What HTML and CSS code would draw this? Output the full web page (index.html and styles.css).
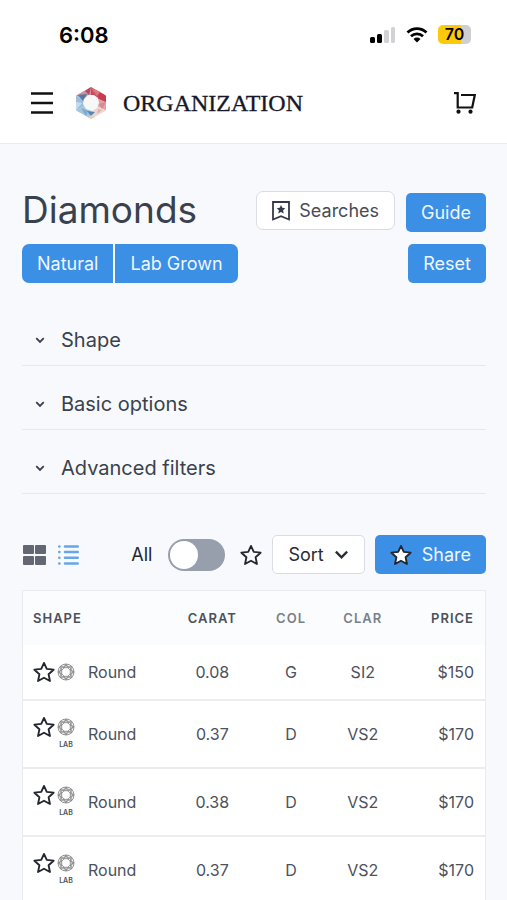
FILE: index.html
```html
<!DOCTYPE html>
<html lang="en">
<head>
<meta charset="utf-8">
<meta name="viewport" content="width=device-width, initial-scale=1">
<title>Diamonds</title>
<link rel="stylesheet" href="styles.css">
</head>
<body>
<svg class="defs" aria-hidden="true">
  <symbol id="star" viewBox="0 0 24 24"><path d="M12 2l3 6.600 7.500.9-5.500 5 1.500 7.300L12 18.200l-6.500 3.600L7 14.500l-5.500-5L9 8.600z"/></symbol>
  <symbol id="gem" viewBox="0 0 18 18">
    <circle cx="9" cy="9" r="8"/><circle cx="9" cy="9" r="6.200"/>
    <path d="M7.200 4.700h3.600l2.500 2.500v3.600l-2.500 2.500H7.200l-2.500-2.500V7.200z"/>
    <path d="M9 1l1.800 3.700 3.900-1.400-1.400 3.900L17 9l-3.700 1.800 1.400 3.900-3.900-1.400L9 17l-1.800-3.700-3.900 1.400 1.400-3.900L1 9l3.700-1.800-1.400-3.900 3.900 1.400z"/>
  </symbol>
  <symbol id="chevron" viewBox="0 0 16 16"><path d="M2 5l6 6 6-6"/></symbol>
</svg>

<header class="top">
  <div class="status">
    <span class="time">6:08</span>
    <div class="indicators">
      <svg width="26" height="17" viewBox="0 0 26 17" aria-hidden="true">
        <rect x="0" y="11" width="5" height="6" rx="1.500"/><rect x="7" y="8" width="5" height="9" rx="1.500"/>
        <rect x="14" y="4" width="5" height="13" rx="1.500" fill="#d2d2d4"/><rect x="21" y="1" width="4" height="16" rx="1.500" fill="#d2d2d4"/>
      </svg>
      <svg width="22" height="16" viewBox="0 0 22 16" aria-hidden="true">
        <path d="M1.500 5.500a13.500 13.500 0 0 1 19 0M5 9.300a8.600 8.600 0 0 1 12 0" fill="none" stroke="#000" stroke-width="2.800"/>
        <path d="M7.500 12a5 5 0 0 1 7 0L11 15.600z"/>
      </svg>
      <span class="battery"><span class="level">70</span></span>
    </div>
  </div>
  <div class="bar">
    <button class="icon-btn" aria-label="Menu">
      <svg width="22" height="22" viewBox="0 0 22 22" aria-hidden="true"><path d="M0 1.500h22M0 11h22M0 20.500h22" stroke="#111" stroke-width="2.400"/></svg>
    </button>
    <a class="brand" href="#">
      <svg width="32" height="34" viewBox="0 0 32 34" aria-hidden="true">
        <path d="M16 1L1 9.500 16 17z" fill="#c8929f"/><path d="M16 1l15 8.500L16 17z" fill="#cf4a59"/>
        <path d="M31 9.500v15L16 17z" fill="#e0a3a6"/><path d="M31 24.500L16 33V17z" fill="#eed6d0"/>
        <path d="M16 33L1 24.500 16 17z" fill="#a5c5df"/><path d="M1 24.500v-15L16 17z" fill="#9dbfdd"/>
        <path d="M16 1l-6 4 4 4z" fill="#b9485d"/><path d="M3 9l9-1-4 7z" fill="#5479af"/>
        <path d="M23 5l8 5v6l-7-3z" fill="#c83c50"/><path d="M16 2l6 8 3-4z" fill="#dc7980"/>
        <path d="M31 16l-7 2 3 5z" fill="#d98990"/><path d="M1 16l6 1-6 7z" fill="#c6dbea"/>
        <path d="M6 22l7 3-2 5z" fill="#7fa9d0"/><path d="M12 25l8 1-4 4z" fill="#5486b5"/>
        <path d="M13 31l4-2 3 2-4 2z" fill="#e8cfae"/><path d="M23 23l4 1-5 4z" fill="#e4b1ac"/>
        <path d="M13 9h6l4 3 1 5-2 5-5 3-6-2-3-5 1-5z" fill="#f6f7f7"/>
      </svg>
      <span>ORGANIZATION</span>
    </a>
    <button class="icon-btn cart" aria-label="Cart">
      <svg width="22" height="22" viewBox="0 0 22 22" aria-hidden="true">
        <path d="M0 1.200h3.700v14.300h14.500L20.800 3H7" fill="none" stroke="#111" stroke-width="2.200"/>
        <circle cx="4.500" cy="19.700" r="2.100" fill="#111"/><circle cx="16.500" cy="19.700" r="2.100" fill="#111"/>
      </svg>
    </button>
  </div>
</header>

<main class="page">
  <div class="heading">
    <h1>Diamonds</h1>
    <div class="heading-actions">
      <button class="btn btn-light searches">
        <svg width="18" height="20" viewBox="0 0 18 20" aria-hidden="true"><path d="M1 1h16v17.500l-8-3.300-8 3.300z" fill="none" stroke="#343b47" stroke-width="1.800"/><path d="M9 4l1.300 2.800 3 .4-2.200 2.100.6 3.100L9 10.900l-2.700 1.500.6-3.100-2.200-2.100 3-.4z" fill="#343b47"/></svg>
        Searches
      </button>
      <button class="btn guide">Guide</button>
    </div>
  </div>
  <div class="origin">
    <div class="segmented"><button class="btn">Natural</button><button class="btn">Lab Grown</button></div>
    <button class="btn">Reset</button>
  </div>

  <div class="filters">
    <button class="filter" aria-expanded="false"><svg class="chev" aria-hidden="true"><use href="#chevron"/></svg>Shape</button>
    <button class="filter" aria-expanded="false"><svg class="chev" aria-hidden="true"><use href="#chevron"/></svg>Basic options</button>
    <button class="filter" aria-expanded="false"><svg class="chev" aria-hidden="true"><use href="#chevron"/></svg>Advanced filters</button>
  </div>

  <div class="tools">
    <div class="views">
      <button class="icon-btn" aria-label="Grid view"><svg width="23" height="20" viewBox="0 0 23 20" fill="#646773" aria-hidden="true"><rect width="11" height="9" rx="1"/><rect x="12" width="11" height="9" rx="1"/><rect y="11" width="11" height="9" rx="1"/><rect x="12" y="11" width="11" height="9" rx="1"/></svg></button>
      <button class="icon-btn" aria-label="List view"><svg width="21" height="20" viewBox="0 0 21 20" stroke="#66a6e6" stroke-width="2.600" stroke-linecap="round" aria-hidden="true"><path d="M1.300 1.500h.1M1.300 7h.1M1.300 12.700h.1M1.300 18.500h.1M7 1.500h12.700M7 7h12.700M7 12.700h12.700M7 18.500h12.700"/></svg></button>
    </div>
    <label class="toggle">All<input type="checkbox" role="switch"></label>
    <button class="icon-btn" aria-label="Favourites only"><svg class="star" aria-hidden="true"><use href="#star"/></svg></button>
    <button class="btn btn-light sort">Sort<svg class="sort-chev" aria-hidden="true"><use href="#chevron"/></svg></button>
    <button class="btn share"><svg class="star star-filled" aria-hidden="true"><use href="#star"/></svg>Share</button>
  </div>

  <table class="results">
    <thead>
      <tr><th class="c-shape">Shape</th><th class="c-carat">Carat</th><th class="c-col soft">Col</th><th class="c-clar soft">Clar</th><th class="c-price">Price</th></tr>
    </thead>
    <tbody>
      <tr>
        <td><div class="shape"><button class="icon-btn" aria-label="Save"><svg class="star" aria-hidden="true"><use href="#star"/></svg></button><span class="gem"><svg aria-hidden="true"><use href="#gem"/></svg></span><span class="name">Round</span></div></td>
        <td>0.08</td><td>G</td><td>SI2</td><td>$150</td>
      </tr>
      <tr>
        <td><div class="shape lab"><button class="icon-btn" aria-label="Save"><svg class="star" aria-hidden="true"><use href="#star"/></svg></button><span class="gem"><svg aria-hidden="true"><use href="#gem"/></svg><small>LAB</small></span><span class="name">Round</span></div></td>
        <td>0.37</td><td>D</td><td>VS2</td><td>$170</td>
      </tr>
      <tr>
        <td><div class="shape lab"><button class="icon-btn" aria-label="Save"><svg class="star" aria-hidden="true"><use href="#star"/></svg></button><span class="gem"><svg aria-hidden="true"><use href="#gem"/></svg><small>LAB</small></span><span class="name">Round</span></div></td>
        <td>0.38</td><td>D</td><td>VS2</td><td>$170</td>
      </tr>
      <tr>
        <td><div class="shape lab"><button class="icon-btn" aria-label="Save"><svg class="star" aria-hidden="true"><use href="#star"/></svg></button><span class="gem"><svg aria-hidden="true"><use href="#gem"/></svg><small>LAB</small></span><span class="name">Round</span></div></td>
        <td>0.37</td><td>D</td><td>VS2</td><td>$170</td>
      </tr>
    </tbody>
  </table>
</main>
</body>
</html>
```
FILE: styles.css
```css
* { box-sizing: border-box; }

body {
  margin: 0;
  background: #f7f9fd;
  color: #3a414e;
  font-family: Inter, "Liberation Sans", sans-serif;
  font-size: 18px;
}

button {
  margin: 0;
  padding: 0;
  border: 0;
  background: none;
  color: inherit;
  font: inherit;
}

svg { display: block; flex: none; }
.defs { position: absolute; width: 0; height: 0; }
.icon-btn { display: flex; }

/* Header */
.top { background: #fff; border-bottom: 1px solid #e6e9ee; }

.status {
  display: flex;
  justify-content: space-between;
  align-items: center;
  height: 69px;
  padding: 0 36px 0 59px;
  color: #000;
}
.time { font-size: 22px; font-weight: 600; }
.indicators { display: flex; align-items: center; gap: 10px; }
.battery {
  display: flex;
  align-items: center;
  width: 33px;
  height: 19px;
  border-radius: 5px;
  background: linear-gradient(90deg, #fdc90b 70%, #cfcfd1 70%);
}
.level { width: 100%; text-align: center; font-size: 16px; font-weight: 600; line-height: 19px; }

.bar {
  display: flex;
  align-items: center;
  height: 74px;
  padding: 0 31px 6px;
}
.brand {
  display: flex;
  align-items: center;
  gap: 16px;
  margin-left: 22px;
  color: #15182a;
  font-family: "Liberation Serif", serif;
  font-size: 24px;
  text-decoration: none;
  -webkit-text-stroke: 0.3px #15182a;
}
.cart { margin-left: auto; }

/* Page */
.page { padding: 47px 21px 0 22px; }

.btn {
  display: flex;
  align-items: center;
  justify-content: center;
  height: 39px;
  padding: 0 15px;
  border-radius: 5px;
  background: #3b8fe5;
  color: #eef6ff;
}
.btn-light {
  border: 1px solid #d9dce2;
  border-radius: 7px;
  background: #fff;
  color: #474c57;
}

.heading { display: flex; justify-content: space-between; }
h1 { margin: 0; font-size: 37px; font-weight: 400; line-height: 38px; }
.heading-actions { display: flex; gap: 11px; }
.searches { gap: 9px; }
.guide { margin-top: 2px; }

.origin { display: flex; justify-content: space-between; margin-top: 12px; }
.segmented { display: flex; gap: 2px; }
.segmented .btn:first-child { border-radius: 7px 0 0 7px; }
.segmented .btn:last-child { border-radius: 0 7px 7px 0; }

.filters { margin-top: 19px; }
.filter {
  display: flex;
  align-items: center;
  gap: 16px;
  width: 100%;
  height: 64px;
  padding: 12px 13px 0;
  border-bottom: 1px solid #e6e8ed;
  font-size: 20px;
}
.chev { width: 10px; height: 10px; fill: none; stroke: #3a414e; stroke-width: 3; }

.tools { display: flex; align-items: center; margin-top: 41px; }
.views { display: flex; gap: 12px; padding-left: 1px; }
.toggle {
  display: flex;
  align-items: center;
  gap: 16px;
  margin: 0 15px 0 auto;
  color: #22262e;
}
.toggle input {
  appearance: none;
  width: 57px;
  height: 32px;
  margin: 0;
  padding: 2px;
  border-radius: 16px;
  background: #989fac;
}
.toggle input::before {
  content: "";
  display: block;
  width: 28px;
  height: 28px;
  border-radius: 50%;
  background: #fff;
}
.star { width: 22px; height: 22px; fill: none; stroke: #22262e; stroke-width: 2; stroke-linejoin: round; }
.star-filled { fill: #fff; }
.sort { gap: 10px; margin: 0 10px; border-radius: 5px; color: #282c34; }
.sort-chev { width: 15px; height: 15px; fill: none; stroke: #282c34; stroke-width: 2.5; }
.share { gap: 10px; }

/* Results */
.results {
  width: 100%;
  margin-top: 16px;
  border: 1px solid #e8eaef;
  border-collapse: collapse;
  table-layout: fixed;
  background: #fff;
  color: #4c515b;
  font-size: 16px;
}
.results th {
  height: 54px;
  padding: 0;
  background: #fbfcfe;
  font-size: 13px;
  font-weight: 600;
  letter-spacing: 1px;
  text-transform: uppercase;
}
.results th.soft { color: #7a7f88; }
.results td { height: 68px; padding: 0; border-bottom: 2px solid #eaecf0; text-align: center; }
.results tbody tr:first-child td { height: 55px; }
.results th:first-child, .results td:first-child { padding-left: 10px; text-align: left; }
.results th:last-child, .results td:last-child { padding-right: 11px; text-align: right; }
.c-shape { width: 32%; }
.c-carat { width: 18%; }
.c-col { width: 16%; }
.c-clar { width: 15%; }

.shape { display: flex; align-items: center; gap: 2px; }
.gem { display: flex; flex-direction: column; align-items: center; width: 18px; }
.gem svg { width: 18px; height: 18px; fill: none; stroke: #858585; stroke-width: 0.9; }
.gem small { margin-top: 4px; font-size: 7px; font-weight: 600; line-height: 10px; }
.shape.lab { align-items: flex-start; }
.shape.lab .icon-btn { margin-top: -2px; }
.shape.lab .name { align-self: center; }
.name { margin-left: 11px; }
```
